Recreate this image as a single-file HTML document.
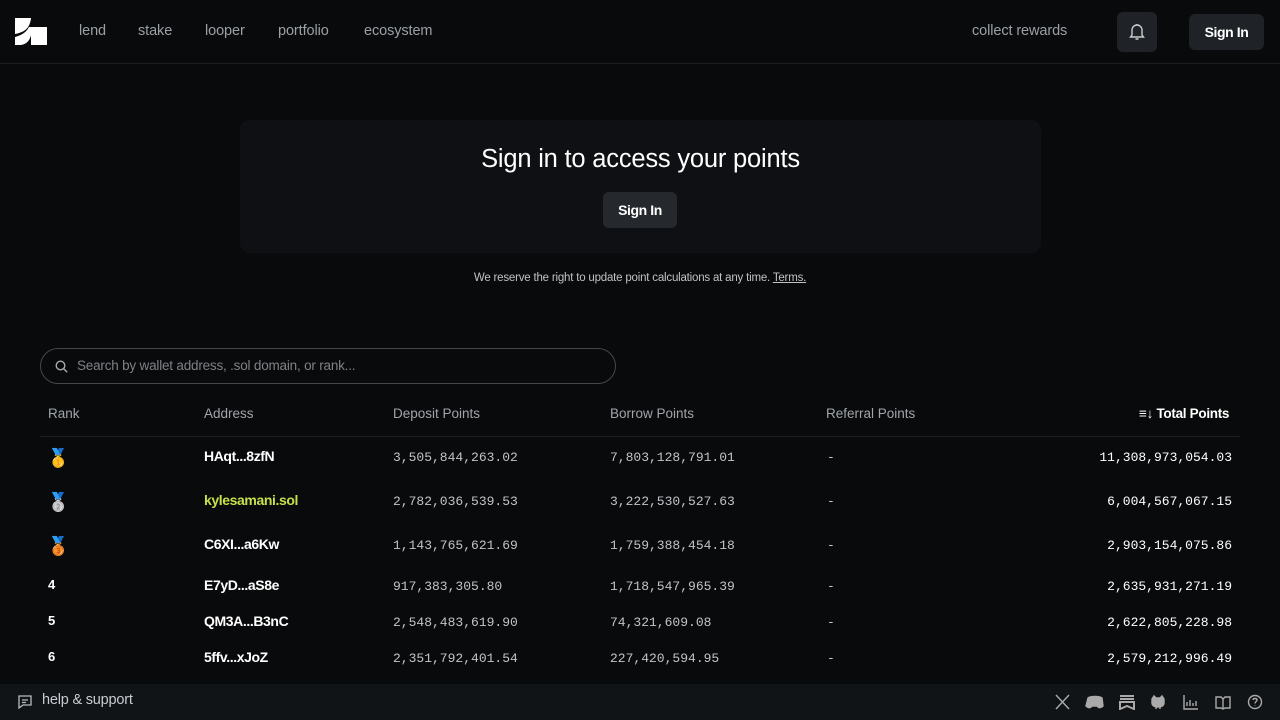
<!DOCTYPE html>
<html><head><meta charset="utf-8"><style>
*{box-sizing:border-box;margin:0;padding:0}
body{width:1280px;height:720px;background:#090a0b;color:#fff;font-family:"Liberation Sans",sans-serif;overflow:hidden;position:relative}
.nav{position:absolute;top:0;left:0;right:0;height:64px;border-bottom:1px solid #1c1f22}
.nav a{position:absolute;top:23px;font-size:14.5px;color:#9aa0a6;text-decoration:none;letter-spacing:-0.1px}
.btn{position:absolute;background:#1f2226;border-radius:6px;color:#fff;font-weight:bold;font-size:14px;display:flex;align-items:center;justify-content:center;letter-spacing:-0.4px}
.card{position:absolute;left:240px;top:120px;width:801px;height:133px;background:#0e1013;border-radius:10px}
.mono{font-family:"Liberation Mono",monospace;font-size:13px;color:#c0c4c8;top:2px}
.row{position:absolute;left:0;width:1280px;height:20px}
.row div{position:absolute}
.hd{position:absolute;top:406px;font-size:13.5px;color:#a0a5aa}
.foot{position:absolute;left:0;right:0;top:684px;height:36px;background:#111417}
</style></head><body>
<div class="nav">
<svg style="position:absolute;left:15px;top:18px" width="32" height="27" viewBox="0 0 32 27"><path d="M6 0h10c-1 9-5 14-16 16V0z" fill="#fff"/><path d="M0 19c8-2 12-6 14-10h18v18H16V17c-1 5-4 9-10 10H0z" fill="#fff"/></svg>
<a style="left:79px">lend</a><a style="left:138px">stake</a><a style="left:205px">looper</a><a style="left:278px">portfolio</a><a style="left:364px">ecosystem</a>
<a style="left:972px">collect rewards</a>
<div class="btn" style="left:1117px;top:12px;width:40px;height:40px"><svg width="16" height="18" viewBox="0 0 16 18" fill="none" stroke="#ccc" stroke-width="1.4"><path d="M3 12V7a5 5 0 0110 0v5l1.5 2h-13z M6.5 16h3 M8 1v1"/></svg></div>
<div class="btn" style="left:1189px;top:14px;width:75px;height:36px">Sign In</div>
</div>
<div class="card">
<div style="position:absolute;top:25px;width:100%;text-align:center;font-size:25.5px;letter-spacing:-0.2px">Sign in to access your points</div>
<div class="btn" style="left:363px;top:72px;width:74px;height:36px;background:#25292d">Sign In</div>
</div>
<div style="position:absolute;top:272px;width:1280px;text-align:center;font-size:11.5px;color:#bfc3c7;letter-spacing:-0.2px">We reserve the right to update point calculations at any time. <span style="text-decoration:underline">Terms.</span></div>
<div style="position:absolute;left:40px;top:348px;width:576px;height:36px;border:1px solid #44484c;border-radius:18px">
<svg style="position:absolute;left:14px;top:11px" width="13" height="13" viewBox="0 0 13 13" fill="none" stroke="#aaa" stroke-width="1.4"><circle cx="5.5" cy="5.5" r="4.3"/><path d="M8.7 8.7l3.5 3.5"/></svg>
<span style="position:absolute;left:36px;top:9px;font-size:13.5px;color:#7d8287;letter-spacing:-0.2px">Search by wallet address, .sol domain, or rank...</span></div>
<div class="hd" style="left:48px">Rank</div><div class="hd" style="left:204px">Address</div><div class="hd" style="left:393px">Deposit Points</div><div class="hd" style="left:610px">Borrow Points</div><div class="hd" style="left:826px">Referral Points</div><div class="hd" style="left:1139px;color:#fff;font-weight:bold;letter-spacing:-0.3px">≡↓ Total Points</div>
<div style="position:absolute;left:40px;top:436px;width:1200px;height:1px;background:#1e2124"></div>
<div class="row" style="top:448px"><div style="left:47px;font-size:18px">🥇</div><div style="left:204px;font-weight:bold;font-size:14px;letter-spacing:-0.4px">HAqt...8zfN</div><div class="mono" style="left:393px">3,505,844,263.02</div><div class="mono" style="left:610px">7,803,128,791.01</div><div class="mono" style="left:827px">-</div><div class="mono" style="right:48px;color:#fff">11,308,973,054.03</div></div>
<div class="row" style="top:492px"><div style="left:47px;font-size:18px">🥈</div><div style="left:204px;font-weight:bold;font-size:14px;color:#c6e04a;letter-spacing:-0.4px">kylesamani.sol</div><div class="mono" style="left:393px">2,782,036,539.53</div><div class="mono" style="left:610px">3,222,530,527.63</div><div class="mono" style="left:827px">-</div><div class="mono" style="right:48px;color:#fff">6,004,567,067.15</div></div>
<div class="row" style="top:536px"><div style="left:47px;font-size:18px">🥉</div><div style="left:204px;font-weight:bold;font-size:14px;letter-spacing:-0.4px">C6XI...a6Kw</div><div class="mono" style="left:393px">1,143,765,621.69</div><div class="mono" style="left:610px">1,759,388,454.18</div><div class="mono" style="left:827px">-</div><div class="mono" style="right:48px;color:#fff">2,903,154,075.86</div></div>
<div class="row" style="top:577px"><div style="left:48px;font-size:13px;font-weight:bold">4</div><div style="left:204px;font-weight:bold;font-size:14px;letter-spacing:-0.4px">E7yD...aS8e</div><div class="mono" style="left:393px">917,383,305.80</div><div class="mono" style="left:610px">1,718,547,965.39</div><div class="mono" style="left:827px">-</div><div class="mono" style="right:48px;color:#fff">2,635,931,271.19</div></div>
<div class="row" style="top:613px"><div style="left:48px;font-size:13px;font-weight:bold">5</div><div style="left:204px;font-weight:bold;font-size:14px;letter-spacing:-0.4px">QM3A...B3nC</div><div class="mono" style="left:393px">2,548,483,619.90</div><div class="mono" style="left:610px">74,321,609.08</div><div class="mono" style="left:827px">-</div><div class="mono" style="right:48px;color:#fff">2,622,805,228.98</div></div>
<div class="row" style="top:649px"><div style="left:48px;font-size:13px;font-weight:bold">6</div><div style="left:204px;font-weight:bold;font-size:14px;letter-spacing:-0.4px">5ffv...xJoZ</div><div class="mono" style="left:393px">2,351,792,401.54</div><div class="mono" style="left:610px">227,420,594.95</div><div class="mono" style="left:827px">-</div><div class="mono" style="right:48px;color:#fff">2,579,212,996.49</div></div>
<div class="foot">
<svg style="position:absolute;left:17px;top:10px" width="16" height="16" viewBox="0 0 16 16" fill="none" stroke="#bbb" stroke-width="1.3"><path d="M2 2h12v9H6l-4 3z M5 6h6 M5 8.5h4"/></svg>
<span style="position:absolute;left:42px;top:8px;font-size:14.5px;color:#c8ccd0;letter-spacing:-0.2px">help &amp; support</span>
<svg style="position:absolute;left:1055px;top:10px" width="210" height="16" viewBox="0 0 210 16" fill="none" stroke="#aaa" stroke-width="1.4">
<path d="M1 1l13 14M14 1L1 15"/>
<path d="M33 4c3-2 11-2 14 0l1 8c-2 2-4 2-5 1l-1-1h-5l-1 1c-1 1-3 1-5-1z" fill="#aaa"/>
<path d="M65 2h14M65 5h14M65 8h14v7l-7-3-7 3z" stroke-width="2"/>
<path d="M97 5l2-3 2 2h4l2-2 2 3v4c0 3-3 4-6 4s-6-1-6-4z M101 13v2M105 13v2" fill="#aaa"/>
<path d="M129 1v14h14M132 12V8M135 12V6M138 12V9M141 12V7"/>
<path d="M161 3h5l2 2 2-2h5v11h-5l-2 1-2-1h-5zM168 5v10"/>
<circle cx="200" cy="8" r="6.5"/><path d="M198 6c0-2 4-2 4 0 0 1.5-2 1.5-2 3.5M200 11.5v.5"/>
</svg>
</div>
</body></html>
